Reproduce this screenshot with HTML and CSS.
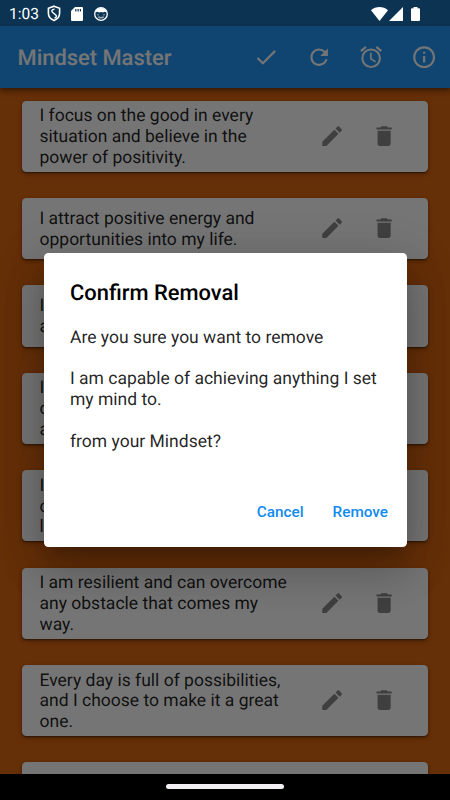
FILE: index.html
```
<!DOCTYPE html>
<html lang="en">
<head>
  <meta charset="UTF-8">
  <meta name="viewport" content="width=device-width, initial-scale=1.0">
  <title>Mindset Master</title>
  <link rel="stylesheet" href="styles.css">
</head>
<body>
  <svg class="defs">
    <symbol id="edit" viewBox="0 0 24 24"><path d="M3 17.25V21h3.75L17.81 9.94l-3.75-3.75L3 17.25zM20.71 7.04a1 1 0 0 0 0-1.41l-2.34-2.34a1 1 0 0 0-1.41 0l-1.83 1.83 3.75 3.75 1.83-1.83z"/></symbol>
    <symbol id="delete" viewBox="0 0 24 24"><path d="M6 19c0 1.1.9 2 2 2h8c1.1 0 2-.9 2-2V7H6v12zM19 4h-3.5l-1-1h-5l-1 1H5v2h14V4z"/></symbol>
  </svg>
  <div class="screen">
    <header class="status">
      <span class="time">1:03</span>
      <svg class="s-shield" viewBox="0 0 14 17"><path d="M7 1.2 12.6 3.2V8.3C12.6 11.8 10.2 14.3 7 15.6 3.8 14.3 1.4 11.8 1.4 8.3V3.2z" fill="none" stroke="#fff" stroke-width="1.6"/><path d="M7.500 4.200C4.700 4.300 4.200 6 5.500 7.200L9 10.300C9.900 11.300 9.300 12.700 7.500 13" fill="none" stroke="#fff" stroke-width="1.400"/></svg>
      <svg class="s-card" viewBox="0 0 12 14"><path fill="#fff" fill-rule="evenodd" d="M4 0h7q1 0 1 1v12q0 1-1 1H1q-1 0-1-1V4zM4.200 2v2.400h1.200V2zM6.500 2v2.400h1.200V2zM8.800 2v2.400H10V2z"/></svg>
      <svg class="s-face" viewBox="0 0 14 14"><circle cx="7" cy="7" r="6.300" fill="none" stroke="#fff" stroke-width="1.300"/><path fill="#fff" d="M1.200 5.500C1.700 2.500 4.300 1 7 1s5.300 1.500 5.800 4.500L10.500 4.800 9 5.600 7 5 5 5.600 3.500 4.800z"/><path fill="#fff" opacity=".55" d="M3 6.800l2.200 1L4 8.900zM11 6.800l-2.200 1L10 8.900zM3.500 10l1.500-.8 2 .8 2-.8 1.500.8-1.500 1.500H5z"/></svg>
      <span class="spacer"></span>
      <svg class="s-wifi" viewBox="0 0 17 14"><path fill="#fff" d="M0 3.300C4.800-1.100 12.200-1.100 17 3.300L8.500 14z"/></svg>
      <svg class="s-cell" viewBox="0 0 14 14"><path fill="#fff" d="M14 0v14H0z"/></svg>
      <svg class="s-battery" viewBox="0 0 9 14"><path fill="#fff" d="M2.500 0h4v1.300H8q1 0 1 1V13q0 1-1 1H1q-1 0-1-1V2.300q0-1 1-1h1.500z"/></svg>
    </header>

    <main class="app">
      <div class="appbar">
        <h1>Mindset Master</h1>
        <button class="icon"><svg viewBox="0 0 24 24"><path d="M9 16.170 4.830 12l-1.420 1.410L9 19 21 7l-1.410-1.410z"/></svg></button>
        <button class="icon"><svg viewBox="0 0 24 24"><path d="M17.650 6.350A7.958 7.958 0 0 0 12 4c-4.420 0-7.990 3.580-7.990 8s3.570 8 7.990 8c3.730 0 6.840-2.550 7.730-6h-2.080A5.990 5.990 0 0 1 12 18c-3.310 0-6-2.690-6-6s2.690-6 6-6c1.660 0 3.140.69 4.220 1.780L13 11h7V4l-2.350 2.350z"/></svg></button>
        <button class="icon"><svg viewBox="0 0 24 24"><path d="m22 5.720-4.600-3.860-1.290 1.530 4.600 3.860L22 5.720zM7.880 3.390 6.600 1.860 2 5.710l1.290 1.530 4.590-3.850zM12.500 8H11v6l4.750 2.850.75-1.230-4-2.370V8zM12 4a9 9 0 1 0 0 18 9 9 0 0 0 0-18zm0 16c-3.870 0-7-3.130-7-7s3.130-7 7-7 7 3.130 7 7-3.130 7-7 7z"/></svg></button>
        <button class="icon"><svg viewBox="0 0 24 24"><path d="M11 7h2v2h-2zm0 4h2v6h-2zm1-9C6.480 2 2 6.480 2 12s4.480 10 10 10 10-4.480 10-10S17.520 2 12 2zm0 18c-4.410 0-8-3.590-8-8s3.590-8 8-8 8 3.590 8 8-3.590 8-8 8z"/></svg></button>
      </div>

      <div class="list">
        <div class="card tall">
          <p>I focus on the good in every<br>situation and believe in the<br>power of positivity.</p>
          <button class="icon"><svg><use href="#edit"/></svg></button>
          <button class="icon"><svg><use href="#delete"/></svg></button>
        </div>
        <div class="card">
          <p>I attract positive energy and<br>opportunities into my life.</p>
          <button class="icon"><svg><use href="#edit"/></svg></button>
          <button class="icon"><svg><use href="#delete"/></svg></button>
        </div>
        <div class="card">
          <p>I am capable of achieving<br>anything I set my mind to.</p>
          <button class="icon"><svg><use href="#edit"/></svg></button>
          <button class="icon"><svg><use href="#delete"/></svg></button>
        </div>
        <div class="card tall">
          <p>I am worthy of love and<br>compassion, happiness<br>and success.</p>
          <button class="icon"><svg><use href="#edit"/></svg></button>
          <button class="icon"><svg><use href="#delete"/></svg></button>
        </div>
        <div class="card tall">
          <p>I let go of worry and<br>choose to enjoy the<br>life I am living.</p>
          <button class="icon"><svg><use href="#edit"/></svg></button>
          <button class="icon"><svg><use href="#delete"/></svg></button>
        </div>
        <div class="card tall">
          <p>I am resilient and can overcome<br>any obstacle that comes my<br>way.</p>
          <button class="icon"><svg><use href="#edit"/></svg></button>
          <button class="icon"><svg><use href="#delete"/></svg></button>
        </div>
        <div class="card tall">
          <p>Every day is full of possibilities,<br>and I choose to make it a great<br>one.</p>
          <button class="icon"><svg><use href="#edit"/></svg></button>
          <button class="icon"><svg><use href="#delete"/></svg></button>
        </div>
        <div class="card tall"></div>
      </div>
    </main>

    <footer class="nav"><div class="handle"></div></footer>

    <div class="scrim">
      <div class="dialog">
        <h2>Confirm Removal</h2>
        <p>Are you sure you want to remove</p>
        <p>I am capable of achieving anything I set my mind to.</p>
        <p>from your Mindset?</p>
        <div class="actions">
          <button>Cancel</button>
          <button>Remove</button>
        </div>
      </div>
    </div>
  </div>
</body>
</html>
```
FILE: styles.css
```
* { box-sizing: border-box; }
body { margin: 0; font-family: Roboto, sans-serif; background: #000; text-rendering: geometricPrecision; }
h1, h2, p { margin: 0; }
button { border: none; background: none; padding: 0; font-family: inherit; }
svg { display: block; flex: none; }
.defs { display: none; }

.screen { position: relative; width: 450px; height: 800px; overflow: hidden; display: flex; flex-direction: column; }

.status { height: 26px; flex: none; display: flex; align-items: center; padding: 1px 30px 0 9px; background: #0c3352; color: #fff; }
.time { font-size: 15.5px; width: 38px; }
.s-shield { width: 14px; height: 17px; }
.s-card { width: 12px; height: 14px; margin-left: 10px; }
.s-face { width: 14px; height: 14px; margin-left: 11px; }
.spacer { flex: 1; }
.s-wifi { width: 17px; height: 14px; }
.s-cell { width: 14px; height: 14px; margin-left: 1px; }
.s-battery { width: 9px; height: 14px; margin-left: 8px; }

.app { flex: 1; min-height: 0; display: flex; flex-direction: column; background: #dc6612; }
.appbar { position: relative; height: 61.5px; flex: none; display: flex; align-items: center; padding-left: 17.5px; background: #2196f3; color: #fff; box-shadow: 0 2px 4px rgba(0,0,0,.3), 0 4px 6px rgba(0,0,0,.2); }
.appbar h1 { flex: 1; padding-top: 3px; font-size: 21.9px; font-weight: 500; }
.icon { width: 52.5px; height: 52.5px; flex: none; display: flex; align-items: center; justify-content: center; color: inherit; }
.icon svg { width: 26.25px; height: 26.25px; fill: currentColor; }

.list { flex: 1; min-height: 0; overflow: hidden; display: flex; flex-direction: column; gap: 26.2px; padding: 13px 22px 0; }
.card { height: 61.3px; flex: none; display: flex; align-items: center; padding: 0 17.5px; background: #fff; color: #8a8a8a; border-radius: 4.4px; box-shadow: 0 2px 1px -1px rgba(0,0,0,.2), 0 1px 2px rgba(0,0,0,.2), 0 2px 4px rgba(0,0,0,.3); }
.card.tall { height: 71.2px; }
.card p { flex: 1; padding-top: 2.5px; font-size: 17.5px; line-height: 20.8px; white-space: nowrap; color: rgba(0,0,0,.87); }

.nav { height: 26px; flex: none; display: flex; justify-content: center; padding-top: 10px; background: #000; }
.handle { position: relative; z-index: 2; width: 118px; height: 5px; border-radius: 3px; background: #f3f0f3; }

/* everything between the status bar and the nav bar is dimmed */
.scrim { position: absolute; top: 26px; left: 0; right: 0; bottom: 26px; display: flex; align-items: center; justify-content: center; background: rgba(0,0,0,.54); }
.dialog { width: 363px; height: 294.5px; padding: 27px 18.5px 9px 26.5px; background: #fff; border-radius: 4.4px; box-shadow: 0 12px 16px -7px rgba(0,0,0,.2), 0 25px 40px 3px rgba(0,0,0,.14), 0 10px 48px 8px rgba(0,0,0,.12); display: flex; flex-direction: column; }
.dialog h2 { font-size: 21.9px; line-height: 27px; font-weight: 500; margin-bottom: 20.8px; }
.dialog p { font-size: 17.5px; line-height: 20.8px; margin-bottom: 20.8px; color: rgba(0,0,0,.87); }
.actions { margin-top: auto; height: 52.5px; display: flex; align-items: center; justify-content: flex-end; gap: 29px; }
.actions button { font-size: 15.3px; font-weight: 500; color: #118bf0; }
```
